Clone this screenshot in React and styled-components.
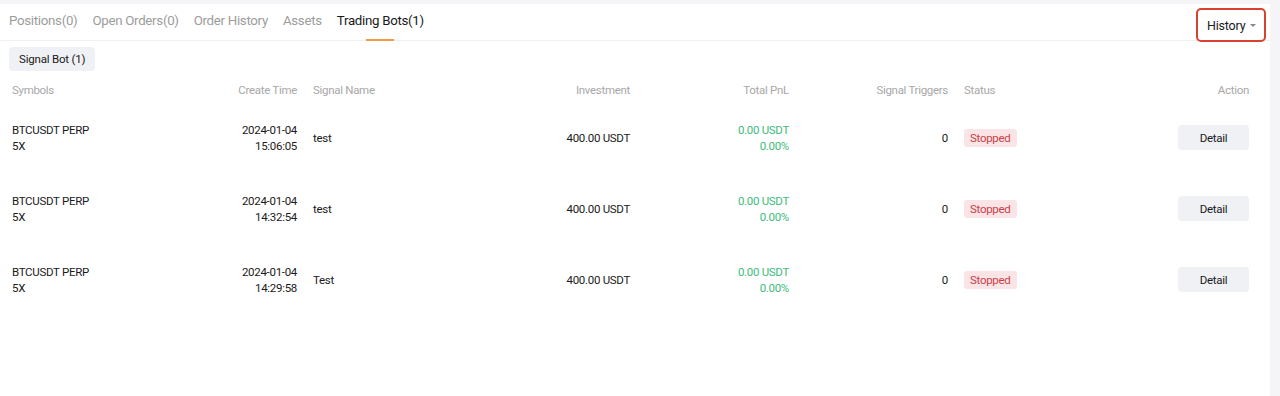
import React from "react";
import styled, { createGlobalStyle } from "styled-components";

const GlobalStyle = createGlobalStyle`
  html, body {
    margin: 0;
    padding: 0;
    background: #f5f5f7;
    font-family: Roboto, "Liberation Sans", sans-serif;
    color: #1a1a1a;
  }
`;

const Page = styled.div`
  height: 396px;
  padding-top: 4px;
  box-sizing: border-box;
  display: flex;
`;

const Panel = styled.div`
  width: 1270px;
  height: 392px;
  background: #fff;
  position: relative;
`;

const TabBar = styled.div`
  height: 36px;
  display: flex;
  align-items: stretch;
  padding-left: 9px;
  gap: 15px;
  border-bottom: 1px solid #f0f0f2;
`;

const Tab = styled.div`
  position: relative;
  display: flex;
  align-items: center;
  padding-bottom: 3px;
  font-size: 13.3px;
  letter-spacing: -0.3px;
  color: ${(p) => (p.$active ? "#1a1a1a" : "#9c9c9c")};
  &::after {
    content: "";
    display: ${(p) => (p.$active ? "block" : "none")};
    position: absolute;
    left: 50%;
    bottom: -1px;
    width: 28px;
    margin-left: -14px;
    height: 2px;
    background: #f39a45;
  }
`;

const HistoryButton = styled.div`
  position: absolute;
  top: 4px;
  right: 4px;
  width: 70px;
  height: 34px;
  box-sizing: border-box;
  border: 2px solid #d8422f;
  border-radius: 5px;
  display: flex;
  align-items: center;
  padding-left: 9px;
  gap: 5px;
  font-size: 12.5px;
  letter-spacing: -0.2px;
  color: #1a1a1a;
  background: #fff;
`;

const Caret = styled.span`
  width: 0;
  height: 0;
  border-left: 3px solid transparent;
  border-right: 3px solid transparent;
  border-top: 3px solid #8a8a8a;
  margin-top: 1px;
`;

const ChipRow = styled.div`
  padding: 6px 9px 0;
`;

const Chip = styled.div`
  display: inline-flex;
  align-items: center;
  height: 24px;
  padding: 0 10px;
  border-radius: 4px;
  background: #f0f1f4;
  font-size: 11.5px;
  letter-spacing: -0.2px;
  color: #1a1a1a;
`;

const Grid = styled.div`
  display: grid;
  grid-template-columns: 140px 129px 150px 151px 143px 143px 150px 119px;
  column-gap: 16px;
  padding: 0 12px;
  margin-top: 7px;
  letter-spacing: -0.3px;
`;

const Head = styled.div`
  height: 24px;
  display: flex;
  align-items: center;
  justify-content: ${(p) => (p.$right ? "flex-end" : "flex-start")};
  font-size: 11.5px;
  color: #a8a8a8;
`;

const Cell = styled.div`
  height: 71px;
  display: flex;
  flex-direction: column;
  justify-content: center;
  align-items: ${(p) => (p.$right ? "flex-end" : "flex-start")};
  text-align: ${(p) => (p.$right ? "right" : "left")};
  font-size: 11.5px;
  line-height: 16px;
  color: ${(p) => (p.$green ? "#3dbb7c" : "#1a1a1a")};
`;

const Badge = styled.span`
  display: inline-flex;
  align-items: center;
  height: 18px;
  padding: 0 7px 0 6px;
  border-radius: 3px;
  background: #fbe4e5;
  color: #c9414a;
  font-size: 11.5px;
`;

const DetailButton = styled.div`
  width: 71px;
  height: 25px;
  border-radius: 4px;
  background: #f0f1f4;
  display: flex;
  align-items: center;
  justify-content: center;
  font-size: 11.5px;
  color: #1a1a1a;
`;

const tabs = [
  { label: "Positions(0)" },
  { label: "Open Orders(0)" },
  { label: "Order History" },
  { label: "Assets" },
  { label: "Trading Bots(1)", active: true },
];

const heads = [
  ["Symbols", false],
  ["Create Time", true],
  ["Signal Name", false],
  ["Investment", true],
  ["Total PnL", true],
  ["Signal Triggers", true],
  ["Status", false],
  ["Action", true],
];

const bots = [
  { date: "2024-01-04", time: "15:06:05", name: "test" },
  { date: "2024-01-04", time: "14:32:54", name: "test" },
  { date: "2024-01-04", time: "14:29:58", name: "Test" },
];

export default function App() {
  return (
    <>
      <GlobalStyle />
      <Page>
        <Panel>
          <TabBar>
            {tabs.map((t) => (
              <Tab key={t.label} $active={t.active}>
                {t.label}
              </Tab>
            ))}
          </TabBar>
          <HistoryButton>
            History <Caret />
          </HistoryButton>
          <ChipRow>
            <Chip>Signal Bot (1)</Chip>
          </ChipRow>
          <Grid>
            {heads.map(([h, right]) => (
              <Head key={h} $right={right}>
                {h}
              </Head>
            ))}
            {bots.map((b, i) => (
              <React.Fragment key={i}>
                <Cell>
                  <div>BTCUSDT PERP</div>
                  <div>5X</div>
                </Cell>
                <Cell $right>
                  <div>{b.date}</div>
                  <div>{b.time}</div>
                </Cell>
                <Cell>{b.name}</Cell>
                <Cell $right>400.00 USDT</Cell>
                <Cell $right $green>
                  <div>0.00 USDT</div>
                  <div>0.00%</div>
                </Cell>
                <Cell $right>0</Cell>
                <Cell>
                  <Badge>Stopped</Badge>
                </Cell>
                <Cell $right>
                  <DetailButton>Detail</DetailButton>
                </Cell>
              </React.Fragment>
            ))}
          </Grid>
        </Panel>
      </Page>
    </>
  );
}
